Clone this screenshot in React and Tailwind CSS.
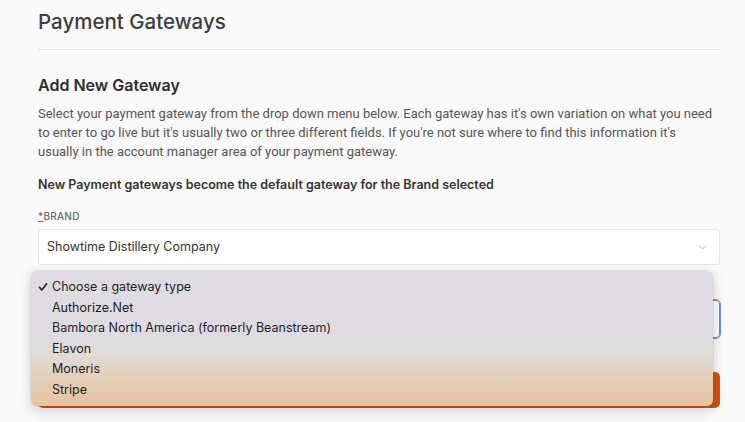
import { ChevronDown } from 'lucide-react';

const gateways = [
  'Choose a gateway type',
  'Authorize.Net',
  'Bambora North America (formerly Beanstream)',
  'Elavon',
  'Moneris',
  'Stripe',
];

const Check = () => (
  <svg width="10" height="10" viewBox="0 0 10 10" fill="none" stroke="currentColor" strokeWidth="1.6" strokeLinecap="round" strokeLinejoin="round">
    <path d="M1.5 5.4 L3.9 8 L8.6 1.8" />
  </svg>
);

const GatewayMenu = () => (
  <div className="absolute left-[31px] top-[271px] w-[682px] rounded-[6px] pt-[6px] pb-[5px] shadow-[0_4px_14px_rgba(0,0,0,0.18),0_0_0_1px_rgba(0,0,0,0.06)] bg-[linear-gradient(180deg,#dedce2_0%,#dedce2_50%,#e0dbd5_63%,#e4cdb4_82%,#e6c4a2_100%)]">
    {gateways.map((g, i) => (
      <div key={g} className="flex items-center h-[20.6px] text-[12.5px] text-[#1f1f1f]">
        <span className="w-[21px] pl-[7px] flex items-center">{i === 0 && <Check />}</span>
        <span>{g}</span>
      </div>
    ))}
  </div>
);

export default function App() {
  return (
    <div className="relative min-h-[422px] bg-[#fafafa] font-['Inter',sans-serif] text-[#3c3c3c] pl-[38px] pr-[25px]">
      <div className="pt-[8px] pb-[13px] border-b border-[#e4e4e4]">
        <h1 className="text-[20.5px] leading-[28px] font-medium text-[#3d3d3f]">Payment Gateways</h1>
      </div>

      <h2 className="mt-[23px] text-[16px] leading-[24px] font-semibold text-[#2e2e2e]">Add New Gateway</h2>
      <p className="mt-[7px] font-['Roboto',sans-serif] text-[13px] leading-[19px] text-[#555]">
        Select your payment gateway from the drop down menu below. Each gateway has it's own variation on what you need
        <br />
        to enter to go live but it's usually two or three different fields. If you're not sure where to find this
        information it's
        <br />
        usually in the account manager area of your payment gateway.
      </p>
      <p className="mt-[14px] text-[12.5px] leading-[19px] font-semibold text-[#333]">
        New Payment gateways become the default gateway for the Brand selected
      </p>

      <label className="block mt-[15px] text-[10px] leading-[14px] tracking-wide text-[#6a6a6a] font-medium">
        <span className="underline">*</span>BRAND
      </label>
      <div className="mt-[6px] h-[36px] flex items-center justify-between bg-white border border-[#e6e6e6] rounded-[3px] pl-[8px] pr-[10px] text-[12.5px] text-[#333]">
        <span>Showtime Distillery Company</span>
        <ChevronDown size={13} strokeWidth={1.5} className="text-[#a8a8a8]" />
      </div>

      <div className="mt-[35px] h-[38px] bg-white border border-[#c8773f] rounded-[4px] outline outline-1 outline-[#5e9fd4]" />

      <button className="mt-[34px] w-full h-[36px] rounded-[5px] bg-[#d3520f] text-white text-[13px] font-semibold">
        Add Gateway
      </button>

      <GatewayMenu />
    </div>
  );
}
